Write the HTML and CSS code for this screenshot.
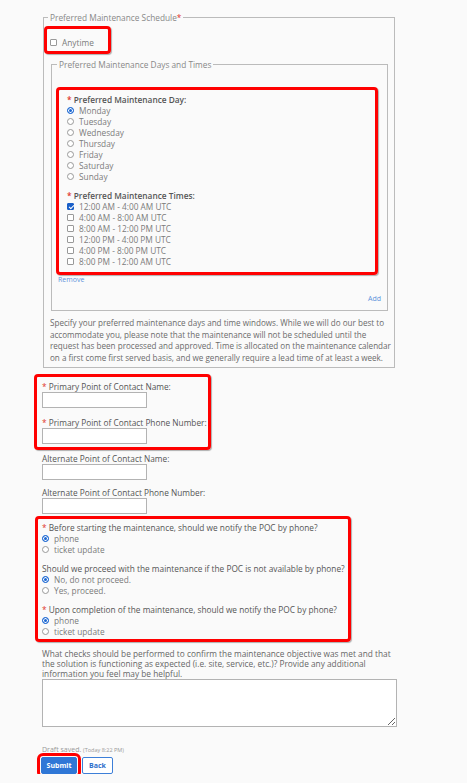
FILE: index.html
```html
<!DOCTYPE html>
<html lang="en">
  <head>
    <meta charset="UTF-8" />
    <meta name="viewport" content="width=device-width, initial-scale=1.0" />
    <title>Maintenance Request</title>
    <link rel="stylesheet" href="styles.css">
  </head>
  <body>
    <form class="page">
      <fieldset class="schedule">
        <legend>Preferred Maintenance Schedule<span class="req">*</span></legend>
        <div class="hl anytime">
          <label class="option"><input type="checkbox" /> Anytime</label>
        </div>

        <fieldset class="days-times">
          <legend>Preferred Maintenance Days and Times</legend>
          <div class="hl slot">
            <div class="field-label"><span class="req">*</span> Preferred Maintenance Day:</div>
            <label class="option"><input type="radio" name="day" checked /> Monday</label>
            <label class="option"><input type="radio" name="day" /> Tuesday</label>
            <label class="option"><input type="radio" name="day" /> Wednesday</label>
            <label class="option"><input type="radio" name="day" /> Thursday</label>
            <label class="option"><input type="radio" name="day" /> Friday</label>
            <label class="option"><input type="radio" name="day" /> Saturday</label>
            <label class="option"><input type="radio" name="day" /> Sunday</label>

            <div class="field-label times-label"><span class="req">*</span> Preferred Maintenance Times:</div>
            <label class="option"><input type="checkbox" checked /> 12:00 AM - 4:00 AM UTC</label>
            <label class="option"><input type="checkbox" /> 4:00 AM - 8:00 AM UTC</label>
            <label class="option"><input type="checkbox" /> 8:00 AM - 12:00 PM UTC</label>
            <label class="option"><input type="checkbox" /> 12:00 PM - 4:00 PM UTC</label>
            <label class="option"><input type="checkbox" /> 4:00 PM - 8:00 PM UTC</label>
            <label class="option"><input type="checkbox" /> 8:00 PM - 12:00 AM UTC</label>
          </div>
          <a class="link remove" href="#">Remove</a>
          <a class="link add" href="#">Add</a>
        </fieldset>

        <p class="note">Specify your preferred maintenance days and time windows. While we will do our best to accommodate you, please note that the maintenance will not be scheduled until the request has been processed and approved. Time is allocated on the maintenance calendar on a first come first served basis, and we generally require a lead time of at least a week.</p>
      </fieldset>

      <div class="hl contact">
        <div class="field">
          <label><span class="req">*</span> Primary Point of Contact Name:</label>
          <input class="text-input" type="text" />
        </div>
        <div class="field">
          <label><span class="req">*</span> Primary Point of Contact Phone Number:</label>
          <input class="text-input" type="text" />
        </div>
      </div>

      <div class="field alt">
        <label>Alternate Point of Contact Name:</label>
        <input class="text-input" type="text" />
      </div>
      <div class="field alt">
        <label>Alternate Point of Contact Phone Number:</label>
        <input class="text-input" type="text" />
      </div>

      <div class="hl polls">
        <div class="question">
          <div class="q-label"><span class="req">*</span> Before starting the maintenance, should we notify the POC by phone?</div>
          <label class="option"><input type="radio" name="before" checked /> phone</label>
          <label class="option"><input type="radio" name="before" /> ticket update</label>
        </div>
        <div class="question">
          <div class="q-label">Should we proceed with the maintenance if the POC is not available by phone?</div>
          <label class="option"><input type="radio" name="proceed" checked /> No, do not proceed.</label>
          <label class="option"><input type="radio" name="proceed" /> Yes, proceed.</label>
        </div>
        <div class="question">
          <div class="q-label"><span class="req">*</span> Upon completion of the maintenance, should we notify the POC by phone?</div>
          <label class="option"><input type="radio" name="after" checked /> phone</label>
          <label class="option"><input type="radio" name="after" /> ticket update</label>
        </div>
      </div>

      <div class="checks">
        <label>What checks should be performed to confirm the maintenance objective was met and that the solution is functioning as expected (i.e. site, service, etc.)? Provide any additional information you feel may be helpful.</label>
        <textarea></textarea>
      </div>

      <div class="draft">Draft saved. <span>(Today 8:22 PM)</span></div>
      <div class="actions">
        <button type="button" class="btn submit">Submit</button>
        <button type="button" class="btn back">Back</button>
      </div>
    </form>
  </body>
</html>
```

FILE: styles.css
```css
* {
  box-sizing: border-box;
}
body {
  margin: 0;
  background-color: #fafafa;
  font-family: "Open Sans", "Liberation Sans", sans-serif;
  font-size: 8.3px;
  line-height: 11px;
  color: #6a6a6a;
}
.page {
  padding: 12px 0 0 42px;
}
.req {
  color: #e0322b;
}
.hl {
  border: 3px solid #f00;
  border-radius: 4px;
  box-shadow: 1px 1px 1px rgba(0, 0, 0, 0.3);
}
.schedule {
  width: 352px;
  margin: 0 0 0 1px;
  padding: 0 6px 4px 6px;
  border: 1px solid #bbb;
  min-width: 0;
}
.schedule > legend {
  margin-left: -2px;
  padding: 0 2px;
  color: #888;
}
.anytime {
  width: 67px;
  margin: 3px 0 0 -6px;
  padding: 8px 3px 3px;
}
.option {
  display: flex;
  align-items: center;
  gap: 5px;
  color: #7a7a7a;
}
.option input {
  appearance: none;
  -webkit-appearance: none;
  flex: none;
  width: 7px;
  height: 7px;
  margin: 0;
  border: 1px solid #999;
  background: #fff;
}
.option input[type="radio"] {
  border-radius: 50%;
}
.option input[type="radio"]:checked {
  border-color: #1a66d2;
  background: #1a66d2;
  box-shadow: inset 0 0 0 1px #fff;
}
.option input[type="checkbox"] {
  position: relative;
  border-radius: 1px;
}
.option input[type="checkbox"]:checked {
  border-color: #1a5fc8;
  background: #1a5fc8;
}
.option input[type="checkbox"]:checked::after {
  content: "";
  position: absolute;
  left: 1.5px;
  top: 0;
  width: 2px;
  height: 4px;
  border: solid #fff;
  border-width: 0 1px 1px 0;
  transform: rotate(45deg);
}
.days-times {
  margin: 5px 0 0 1px;
  padding: 17px 9px 6px 4px;
  border: 1px solid #bbb;
  min-width: 0;
}
.days-times > legend {
  margin-left: 1px;
  padding: 0 2px;
  color: #888;
}
.slot {
  padding: 4px 8px 5px;
}
.field-label {
  color: #555;
  font-weight: 600;
}
.times-label {
  margin-top: 8px;
}
.link {
  display: block;
  font-size: 7px;
  line-height: 10px;
  color: #5d92da;
  text-decoration: none;
}
.remove {
  margin-left: 2px;
}
.add {
  margin: 9px -3px 0 0;
  text-align: right;
}
.note {
  margin: 6px -6px 0 0;
  font-size: 8.1px;
  line-height: 11.5px;
}
.field label {
  display: block;
  color: #555;
  white-space: nowrap;
}
.text-input {
  display: block;
  width: 105px;
  height: 16px;
  margin: 0;
  padding: 0 3px;
  border: 1px solid #b3b3b3;
  background: #fff;
  font: inherit;
}
.contact {
  width: 177px;
  margin: 6px 0 0 -8px;
  padding: 4px 1px 3px 5px;
}
.field + .field {
  margin-top: 9px;
}
.alt {
  margin-top: 3px;
}
.alt + .alt {
  margin-top: 7px;
}
.polls {
  width: 316px;
  margin: 2px 0 0 -7px;
  padding: 3px 1px 2px 4px;
}
.q-label {
  color: #555;
  white-space: nowrap;
}
.question + .question {
  margin-top: 8px;
}
.checks {
  width: 355px;
  margin-top: 7px;
}
.checks label {
  display: block;
  line-height: 10px;
  color: #666;
}
.checks textarea {
  display: block;
  width: 355px;
  height: 48px;
  margin: 0;
  border: 1px solid #b3b3b3;
  background: #fff;
  font: inherit;
}
.draft {
  margin-top: 18px;
  font-size: 7px;
  line-height: 9px;
  color: #999;
}
.draft span {
  font-size: 5.5px;
}
.actions {
  display: flex;
  gap: 5px;
  margin: 2px 0 0 -1px;
}
.btn {
  height: 17px;
  padding: 0;
  border-radius: 2px;
  font: 700 7px "Open Sans", sans-serif;
  cursor: pointer;
}
.submit {
  width: 36px;
  background-color: #2f77d6;
  border: 1px solid #2f77d6;
  color: #fff;
  outline: 3px solid #f00;
  outline-offset: 1px;
}
.back {
  width: 31px;
  background-color: #fff;
  border: 1px solid #3d7fd8;
  color: #2f6fcc;
}
```
